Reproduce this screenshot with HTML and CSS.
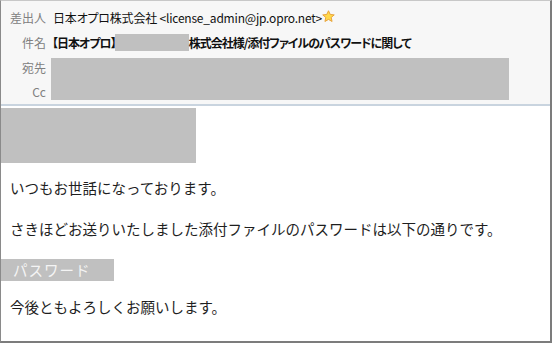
FILE: index.html
```html
<!DOCTYPE html>
<html lang="ja">
<head>
    <meta charset="UTF-8">
    <meta name="viewport" content="width=device-width, initial-scale=1.0">
    <title>添付ファイルのパスワード</title>
    <link rel="stylesheet" href="styles.css">
</head>
<body>
    <div id="mail">
        <div id="cabecalho">
            <div class="linha">
                <span class="rotulo">差出人</span>
                <span class="valor remetente">日本オプロ株式会社 &lt;license_admin@jp.opro.net&gt;</span>
                <svg class="estrela" width="13" height="13" viewBox="0 0 12 12">
                    <path d="M6 0.7 L7.6 4.1 L11.3 4.5 L8.5 6.9 L9.3 10.6 L6 8.7 L2.7 10.6 L3.5 6.9 L0.7 4.5 L4.4 4.1 Z" fill="#ffd84a" stroke="#e6a13a" stroke-width="0.9" stroke-linejoin="round"/>
                </svg>
            </div>
            <div class="linha">
                <span class="rotulo">件名</span>
                <span class="valor assunto">【日本オプロ】<span class="tarja t_empresa"></span>株式会社様/添付ファイルのパスワードに関して</span>
            </div>
            <div class="destino">
                <div class="rotulos">
                    <span class="rotulo">宛先</span>
                    <span class="rotulo">Cc</span>
                </div>
                <div class="tarja t_dest"></div>
            </div>
        </div>
        <div id="corpo">
            <div class="tarja t_nome"></div>
            <p>いつもお世話になっております。</p>
            <p>さきほどお送りいたしました添付ファイルのパスワードは以下の通りです。</p>
            <div class="senha">パスワード</div>
            <p>今後ともよろしくお願いします。</p>
        </div>
    </div>
</body>
</html>
```

FILE: styles.css
```css
@charset "UTF-8";
*{
    border: none;
    padding: 0px;
    margin: 0px;
    box-sizing: border-box;
}
html, body{
    width: 552px;
    height: 343px;
    background-color: #fff;
}
body{
    font-family: "Noto Sans CJK JP", "Noto Sans", sans-serif;
    color: #1e1e1e;
}
#mail{
    width: 552px;
    height: 343px;
    border-top: 1px solid #c8c8c8;
    border-left: 1px solid #8a8a8a;
    border-right: 2px solid #7c7c7c;
    border-bottom: 2px solid #7c7c7c;
    display: flex;
    flex-direction: column;
    overflow: hidden;
}
#cabecalho{
    background-color: #f7f7f7;
    border-bottom: 2px solid #c9d4df;
    padding-top: 4px;
    height: 105px;
    font-size: 12px;
}
.linha{
    display: flex;
    align-items: center;
    height: 25px;
}
.rotulo{
    width: 45px;
    text-align: right;
    color: #808080;
    flex-shrink: 0;
}
.valor{
    margin-left: 7px;
    color: #111;
    white-space: nowrap;
    display: flex;
    align-items: center;
    font-feature-settings: "palt";
}
.remetente{
    letter-spacing: -0.2px;
}
.assunto{
    font-weight: bold;
    margin-left: 6px;
    letter-spacing: -1px;
}
.estrela{
    margin-left: 0px;
    margin-top: -2px;
}
.tarja{
    background-color: #c0c0c0;
}
.t_empresa{
    display: inline-block;
    width: 74px;
    height: 17px;
    margin-left: -1px;
}
.destino{
    display: flex;
    align-items: flex-start;
    margin-top: 3px;
}
.rotulos{
    display: flex;
    flex-direction: column;
    margin-top: -2px;
}
.rotulos .rotulo{
    height: 24px;
    line-height: 24px;
}
.t_dest{
    margin-left: 5px;
    width: 458px;
    height: 42px;
}
#corpo{
    flex: 1;
    padding-top: 2px;
    font-size: 14.5px;
}
.t_nome{
    width: 195px;
    height: 55px;
}
#corpo p{
    padding-left: 9px;
    line-height: 20px;
}
#corpo p + p{
    margin-top: 21px;
}
.t_nome + p{
    margin-top: 15px;
}
.senha{
    margin-top: 20px;
    width: 113px;
    height: 22px;
    line-height: 22px;
    padding-left: 12px;
    background-color: #c0c0c0;
    color: #f4f4f4;
    letter-spacing: 1px;
}
.senha + p{
    margin-top: 16px;
}
```
